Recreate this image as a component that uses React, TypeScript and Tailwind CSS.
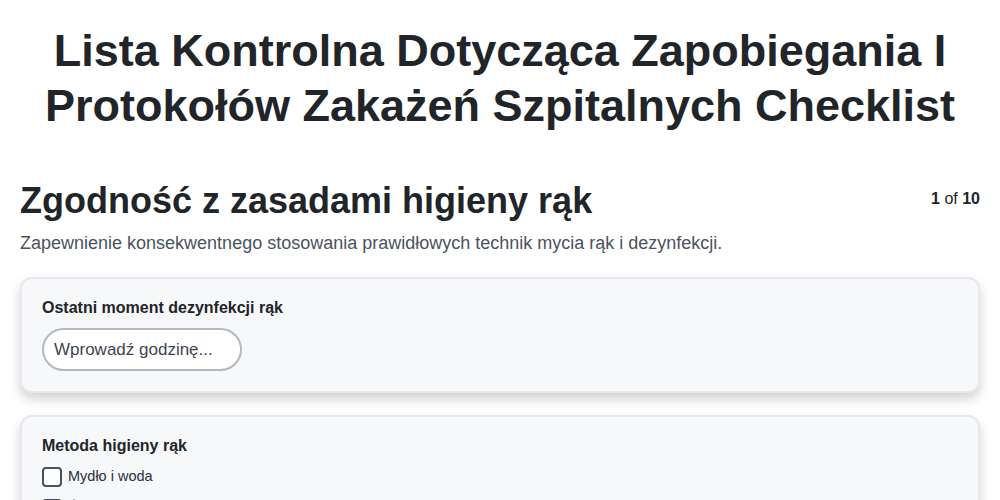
import React from 'react';

interface Option {
  id: string;
  label: string;
}

const methods: Option[] = [
  { id: 'soap', label: 'Mydło i woda' },
  { id: 'alcohol', label: 'Środek dezynfekujący na bazie alkoholu' },
  { id: 'gloves', label: 'Rękawiczki jednorazowe' },
];

function Card({ children }: { children: React.ReactNode }) {
  return (
    <div className="rounded-xl border-2 border-[#e8e9ef] bg-[#f7f8fa] px-5 pt-[17px] pb-5 shadow-[0_6px_12px_rgba(0,0,0,0.18)]">
      {children}
    </div>
  );
}

export default function App() {
  return (
    <div className="min-h-screen bg-white px-5 font-['Liberation_Sans',Arial,sans-serif] text-[#212529]">
      <h1 className="mx-auto pt-[23px] text-center text-[45px] font-bold leading-[55px]">
        Lista Kontrolna Dotycząca Zapobiegania I Protokołów Zakażeń Szpitalnych Checklist
      </h1>

      <div className="mt-[46px] flex items-start justify-between">
        <h2 className="text-[36px] font-bold leading-[44px]">Zgodność z zasadami higieny rąk</h2>
        <div className="pt-2 text-base leading-6">
          <span className="font-bold">1</span> of <span className="font-bold">10</span>
        </div>
      </div>
      <p className="mt-2 text-[18px] leading-6 text-[#4b5262]">
        Zapewnienie konsekwentnego stosowania prawidłowych technik mycia rąk i dezynfekcji.
      </p>

      <div className="mt-[22px] flex flex-col gap-[22px]">
        <Card>
          <label className="block text-base font-bold leading-6">Ostatni moment dezynfekcji rąk</label>
          <input
            type="text"
            placeholder="Wprowadź godzinę..."
            className="mt-2 h-[43px] w-[200px] rounded-full border-2 border-[#b4b8be] bg-white px-[10px] text-[17px] text-[#3f4452] placeholder:text-[#3f4452] outline-none"
          />
        </Card>
        <Card>
          <label className="block text-base font-bold leading-6">Metoda higieny rąk</label>
          <div className="mt-2 flex flex-col gap-[10px]">
            {methods.map((m) => (
              <label key={m.id} className="flex items-center gap-[6px] text-[14.5px] text-[#2a2f3a]">
                <span className="h-5 w-5 rounded-[4px] border-2 border-[#4b5060] bg-white" />
                {m.label}
              </label>
            ))}
          </div>
        </Card>
      </div>
    </div>
  );
}
